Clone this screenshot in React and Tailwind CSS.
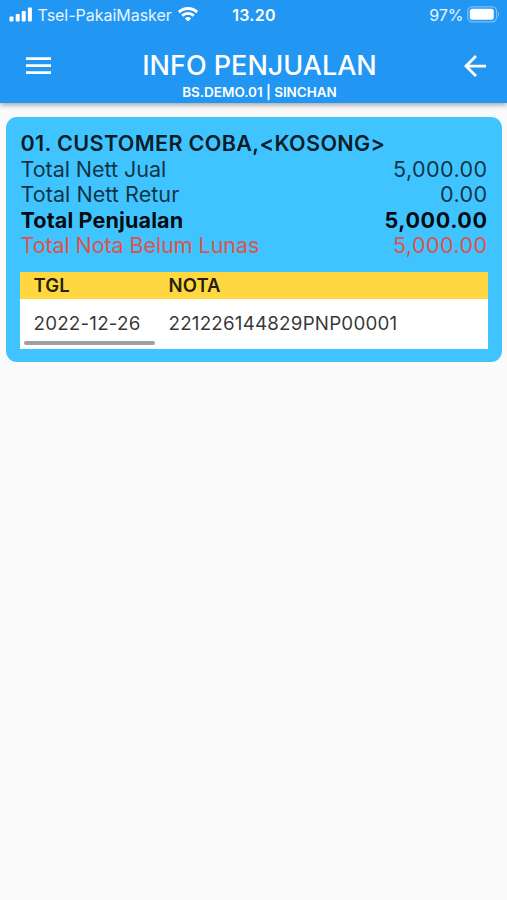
import React from 'react';

const SUMMARY = [
    { label: 'Total Nett Jual', value: '5,000.00', className: 'text-black/75', labelClass: 'tracking-[-0.08px]', valueClass: 'tracking-[0.38px]' },
    { label: 'Total Nett Retur', value: '0.00', className: 'text-black/75', labelClass: 'tracking-[0.02px]', valueClass: 'tracking-[0.38px]' },
    { label: 'Total Penjualan', value: '5,000.00', className: 'font-bold text-black/95', labelClass: 'tracking-[0.1px]', valueClass: 'tracking-[0.55px]' },
    { label: 'Total Nota Belum Lunas', value: '5,000.00', className: 'text-[#dc544c]', labelClass: 'tracking-[-0.12px]', valueClass: 'tracking-[0.38px]' }
];

const NOTAS = [{ date: '2022-12-26', number: '221226144829PNP00001' }];

function StatusBar() {
    return (
        <div className="grid h-[30px] grid-cols-[1fr_auto_1fr] items-center pl-[9px] pr-[7px] text-[16px] leading-none">
            <div className="flex items-center">
                <svg className="-mt-px h-[15px] w-[24px]" viewBox="0 0 24 15" fill="currentColor">
                    <rect x="0.5" y="9.5" width="4" height="5" rx="1" />
                    <rect x="6.7" y="7" width="4" height="7.5" rx="1" />
                    <rect x="12.7" y="4" width="4" height="10.5" rx="1" />
                    <rect x="18.9" y="0.5" width="4" height="14" rx="1" />
                </svg>
                <span className="ml-[4.5px] tracking-[-0.02px] text-white/90">Tsel-PakaiMasker</span>
                <svg className="-mt-px ml-[6px] h-[15px] w-[20px]" viewBox="0 0 20 15" fill="none" stroke="currentColor" strokeWidth="2.8">
                    <path d="M0.9 5.2a13 13 0 0 1 18.2 0" />
                    <path d="M4.2 8.8a8.3 8.3 0 0 1 11.6 0" />
                    <path d="M6.9 11.5a4.6 4.6 0 0 1 6.2 0L10 14.6z" fill="currentColor" stroke="none" />
                </svg>
            </div>
            <span className="-ml-px font-semibold tracking-[0.3px]">13.20</span>
            <div className="flex items-center justify-end">
                <span className="mr-[3.5px] text-white/90">97%</span>
                <svg className="-mt-[2px] h-[17px] w-[33px]" viewBox="0 0 33 17">
                    <rect x="0.8" y="0.8" width="28.8" height="15" rx="4.5" fill="none" stroke="white" strokeOpacity="0.4" strokeWidth="1.3" />
                    <rect x="2.8" y="2.8" width="24" height="11" rx="2.5" fill="white" />
                    <path d="M31 6c1.4.6 1.4 4 0 4.6z" fill="white" fillOpacity="0.4" />
                </svg>
            </div>
        </div>
    );
}

function AppBar() {
    return (
        <header className="relative h-[103px] bg-[#2196f3] text-white shadow-[0_2px_5px_rgba(0,0,0,0.35)]">
            <StatusBar />
            <div className="grid h-[73px] grid-cols-[25px_1fr_22px] items-start pl-[26px] pr-[21px]">
                <button className="mt-[27px]" aria-label="Menu">
                    <svg className="h-[17px] w-[25px]" viewBox="0 0 25 17" fill="currentColor">
                        <path d="M0 0.3h25v2.6H0zM0 7.3h25v2.6H0zM0 14.3h25v2.6H0z" />
                    </svg>
                </button>
                <div className="mt-[20px] pl-[4px] text-center">
                    <h1 className="text-[27px] font-medium leading-[32px]">INFO PENJUALAN</h1>
                    <p className="mt-[2px] text-[13.5px] font-semibold leading-[16px] tracking-[-0.03px]">BS.DEMO.01 | SINCHAN</p>
                </div>
                <button className="mt-[25px]" aria-label="Back">
                    <svg className="h-[22px] w-[22px]" viewBox="4 4 16 16" fill="currentColor">
                        <path d="M20 11H7.83l5.59-5.59L12 4l-8 8 8 8 1.41-1.41L7.83 13H20v-2z" />
                    </svg>
                </button>
            </div>
        </header>
    );
}

function NotaTable() {
    return (
        <div className="mt-[13px] bg-white text-[18.8px]">
            <div className="grid h-[27px] grid-cols-[135px_1fr] items-center bg-[#ffd740] pl-[13.5px] text-[18.5px] font-semibold tracking-[0.1px] text-black/87">
                <span>TGL</span>
                <span>NOTA</span>
            </div>
            {NOTAS.map((nota) => (
                <div key={nota.number} className="grid h-[50px] grid-cols-[135px_1fr] items-center pl-[13.5px] pt-px tracking-[0.2px] text-black/80">
                    <span>{nota.date}</span>
                    <span>{nota.number}</span>
                </div>
            ))}
            {/* Horizontal scroll indicator */}
            <div className="-mt-[8px] h-[8px] pl-[4px]">
                <div className="h-[4px] w-[131px] rounded-full bg-[#a0a0a0]" />
            </div>
        </div>
    );
}

function CustomerCard() {
    return (
        <section className="ml-[6px] mr-[5.5px] mt-[14px] h-[245px] rounded-[11px] bg-[#40c4ff] pl-[14px] pr-[13.5px] pt-[14px]">
            <div className="pl-[0.5px] pr-[0.5px] text-[21.6px] leading-[25.6px]">
                <h2 className="font-semibold tracking-[0.33px] text-black/87">01. CUSTOMER COBA,&lt;KOSONG&gt;</h2>
                {SUMMARY.map((row) => (
                    <div key={row.label} className={`flex justify-between ${row.className}`}>
                        <span className={row.labelClass}>{row.label}</span>
                        <span className={row.valueClass}>{row.value}</span>
                    </div>
                ))}
            </div>
            <NotaTable />
        </section>
    );
}

export default function App() {
    return (
        <div className="min-h-screen bg-[#fafafa] font-['Inter',sans-serif]">
            <AppBar />
            <main className="flow-root">
                <CustomerCard />
            </main>
        </div>
    );
}
